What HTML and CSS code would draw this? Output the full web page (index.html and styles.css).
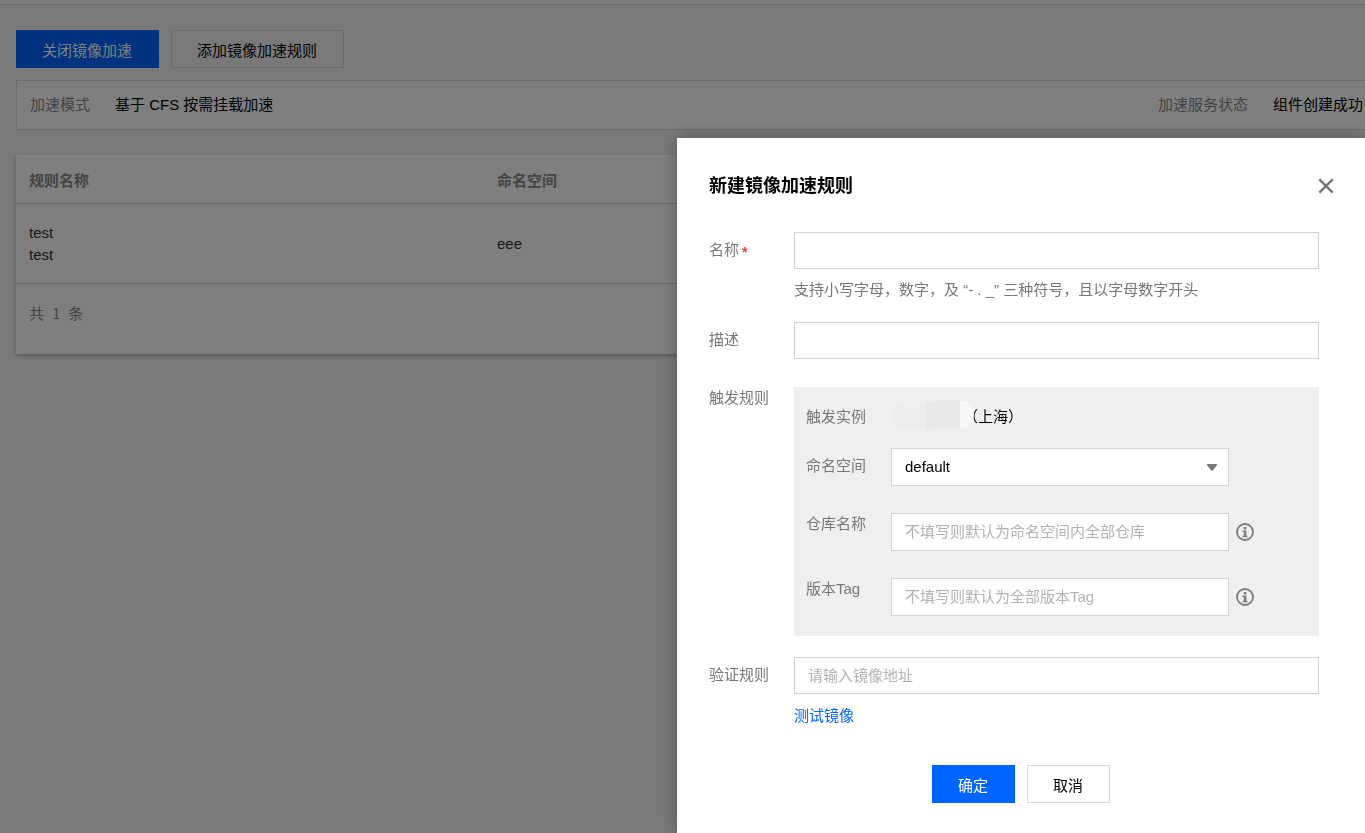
FILE: index.html
```html
<!DOCTYPE html>
<html lang="zh-CN">
<head>
<meta charset="utf-8">
<title>镜像加速</title>
<meta name="viewport" content="width=device-width, initial-scale=1">
<link rel="stylesheet" href="styles.css">
</head>
<body>
<div class="page">
  <div class="topbar"></div>
  <main class="content">
    <div class="toolbar">
      <button type="button" class="btn btn-primary">关闭镜像加速</button>
      <button type="button" class="btn btn-plain">添加镜像加速规则</button>
    </div>
    <dl class="status">
      <div class="status-item"><dt>加速模式</dt><dd>基于 CFS 按需挂载加速</dd></div>
      <div class="status-item"><dt>加速服务状态</dt><dd>组件创建成功</dd></div>
    </dl>
    <section class="card">
      <table class="rules">
        <colgroup><col class="col-name"><col></colgroup>
        <thead><tr><th scope="col">规则名称</th><th scope="col">命名空间</th></tr></thead>
        <tbody><tr><td>test<br>test</td><td>eee</td></tr></tbody>
      </table>
      <div class="total">共<span class="total-num">1</span>条</div>
    </section>
  </main>
</div>

<div class="mask">
  <div class="dialog" role="dialog" aria-modal="true" aria-labelledby="dialog-title">
    <header class="dialog-head">
      <h2 id="dialog-title">新建镜像加速规则</h2>
      <button type="button" class="close" aria-label="关闭">
        <svg width="16" height="16" viewBox="0 0 16 16"><path d="M1.3 1.3 14.7 14.7M14.7 1.3 1.3 14.7" fill="none" stroke="#777" stroke-width="2.5"/></svg>
      </button>
    </header>
    <form class="form">
      <div class="row">
        <label for="name">名称<span class="required">*</span></label>
        <div>
          <input id="name" class="field" type="text">
          <p class="hint">支持小写字母，数字，及 “- . _” 三种符号，且以字母数字开头</p>
        </div>
      </div>
      <div class="row row-loose">
        <label for="desc">描述</label>
        <input id="desc" class="field" type="text">
      </div>
      <div class="row row-top">
        <span class="row-label" id="trigger">触发规则</span>
        <div class="panel" role="group" aria-labelledby="trigger">
          <div class="subrow subrow-text">
            <span class="sub-label">触发实例</span>
            <span class="instance">
              <svg class="redaction" width="84" height="32" viewBox="0 0 84 32"><path d="M0 4 35 3V29L4 30 0 27Z" fill="#ededed"/><path d="M35 4 51 1 69 1V29L55 28 35 30Z" fill="#e8e8e8"/><path d="M69 2H73Q83 5 83 15 83 25 73 29H69Z" fill="#f8f8f8"/></svg>（上海）
            </span>
          </div>
          <div class="subrow subrow-select">
            <label for="ns">命名空间</label>
            <span class="select-wrap">
              <select id="ns" class="field"><option>default</option></select>
              <svg class="arrow" width="10" height="7" viewBox="0 0 10 7"><path d="M0 0H10V1L5.8 6.5H4.2L0 1Z" fill="#777"/></svg>
            </span>
          </div>
          <div class="subrow">
            <label for="repo">仓库名称</label>
            <input id="repo" class="field" type="text" placeholder="不填写则默认为命名空间内全部仓库">
            <svg class="info" width="18" height="18" viewBox="0 0 18 18"><circle cx="9" cy="9" r="8" fill="none" stroke="#7c7c7c" stroke-width="1.8"/><path d="M7.8 4H10.4V6.4H7.8ZM6.4 7.6H10.4V12.8H11.4V14.2H6.6V12.8H7.8V9H6.4Z" fill="#7c7c7c"/></svg>
          </div>
          <div class="subrow">
            <label for="tag">版本Tag</label>
            <input id="tag" class="field" type="text" placeholder="不填写则默认为全部版本Tag">
            <svg class="info" width="18" height="18" viewBox="0 0 18 18"><circle cx="9" cy="9" r="8" fill="none" stroke="#7c7c7c" stroke-width="1.8"/><path d="M7.8 4H10.4V6.4H7.8ZM6.4 7.6H10.4V12.8H11.4V14.2H6.6V12.8H7.8V9H6.4Z" fill="#7c7c7c"/></svg>
          </div>
        </div>
      </div>
      <div class="row">
        <label for="verify">验证规则</label>
        <div>
          <input id="verify" class="field" type="text" placeholder="请输入镜像地址">
          <p class="hint hint-link"><a href="#">测试镜像</a></p>
        </div>
      </div>
      <div class="actions">
        <button type="submit" class="btn btn-primary">确定</button>
        <button type="button" class="btn btn-plain">取消</button>
      </div>
    </form>
  </div>
</div>
</body>
</html>
```
FILE: styles.css
```css
* { box-sizing: border-box; }

body {
  margin: 0;
  background: #f2f2f2;
  color: #000;
  font: 15px/22px "Liberation Sans", "Noto Sans CJK SC", sans-serif;
}

button, input, select { font: inherit; color: inherit; }
h2, p, dl, dd { margin: 0; }

.page { min-height: 100vh; overflow: hidden; }

.topbar {
  height: 5px;
  background: #fff;
  border-bottom: 1px solid #d4d4d4;
}

.content { padding: 25px 0 0 16px; }

.toolbar {
  display: flex;
  gap: 12px;
  margin-bottom: 12px;
}

.btn {
  height: 38px;
  padding: 3px 26px 0 25px;
  border: 1px solid #d8d8d8;
  background: transparent;
}

.btn-primary {
  border-color: #0064ff;
  background: #0064ff;
  color: #fff;
}

.status {
  display: flex;
  justify-content: space-between;
  padding: 13px 2px 13px 13px;
  margin-bottom: 25px;
  border: 1px solid #d8d8d8;
  border-right: 0;
  background: #fff;
}

.status-item { display: flex; gap: 25px; }
.status dt { color: #888; }

.card {
  background: #fff;
  box-shadow: 0 2px 4px rgba(0, 0, 0, .25);
}

.rules {
  width: 100%;
  table-layout: fixed;
  border-collapse: separate;
  border-spacing: 0;
  text-align: left;
}

.col-name { width: 468px; }

.rules th {
  padding: 15px 13px 11px;
  border-bottom: 1px solid #d4d4d4;
  color: #888;
  font-weight: bold;
}

.rules td {
  padding: 18px 13px 17px;
  border-bottom: 1px solid #d4d4d4;
  color: #333;
}

.total {
  padding: 18px 13px 30px;
  color: #888;
  font-family: "Noto Sans CJK SC", sans-serif;
}

.total-num { margin: 0 8px; }

.mask {
  position: fixed;
  inset: 0;
  display: flex;
  justify-content: flex-end;
  padding-top: 138px;
  background: rgba(0, 0, 0, .5);
}

.dialog {
  width: 688px;
  max-width: 100%;
  padding: 32px 46px 30px 32px;
  overflow: auto;
  background: #fff;
  box-shadow: 0 0 16px rgba(0, 0, 0, .3);
}

.dialog-head {
  display: flex;
  align-items: center;
  justify-content: space-between;
  margin: 0 -15px 30px 0;
}

.dialog-head h2 {
  font-size: 18px;
  line-height: 32px;
}

.close {
  display: flex;
  padding: 0;
  border: 0;
  background: none;
}

.row {
  display: grid;
  grid-template-columns: 85px minmax(0, 1fr);
  align-items: start;
  margin-bottom: 21px;
}

.row-loose { margin-bottom: 28px; }
.row > label { padding-top: 7px; }
label, .row-label, .sub-label { color: #777; }

.required {
  margin-left: 3px;
  color: #e54545;
  font-size: 14px;
  font-weight: bold;
  line-height: 1;
  vertical-align: -2px;
}

.field {
  display: block;
  width: 100%;
  height: 37px;
  padding: 0 13px;
  border: 1px solid #d4d4d4;
  border-radius: 0;
  background: #fff;
  outline: 0;
}

.field::placeholder { color: #b2b2b2; opacity: 1; }

.hint {
  padding-top: 10px;
  color: #777;
}

.hint-link { padding-top: 11px; }
.hint a { color: #0064ff; text-decoration: none; }

.panel {
  display: flex;
  flex-direction: column;
  gap: 27px;
  padding: 19px 12px 20px;
  background: #efefef;
}

.subrow {
  display: grid;
  grid-template-columns: 85px minmax(0, 338px) 25px;
  align-items: start;
}

.subrow .field { height: 38px; }
.subrow input.field { padding-bottom: 2px; }
.subrow-text { margin-bottom: -7px; }
.subrow-select label { padding-top: 7px; }

.info {
  align-self: center;
  margin-left: 7px;
}

.instance {
  position: relative;
  padding-left: 72px;
}

.redaction {
  position: absolute;
  left: 0;
  top: -7px;
}

.select-wrap { position: relative; }
.select-wrap .field { appearance: none; }

.arrow {
  position: absolute;
  right: 12px;
  top: 16px;
  pointer-events: none;
}

.actions {
  display: flex;
  justify-content: center;
  gap: 12px;
  margin: 38px -14px 0 0;
}
```
